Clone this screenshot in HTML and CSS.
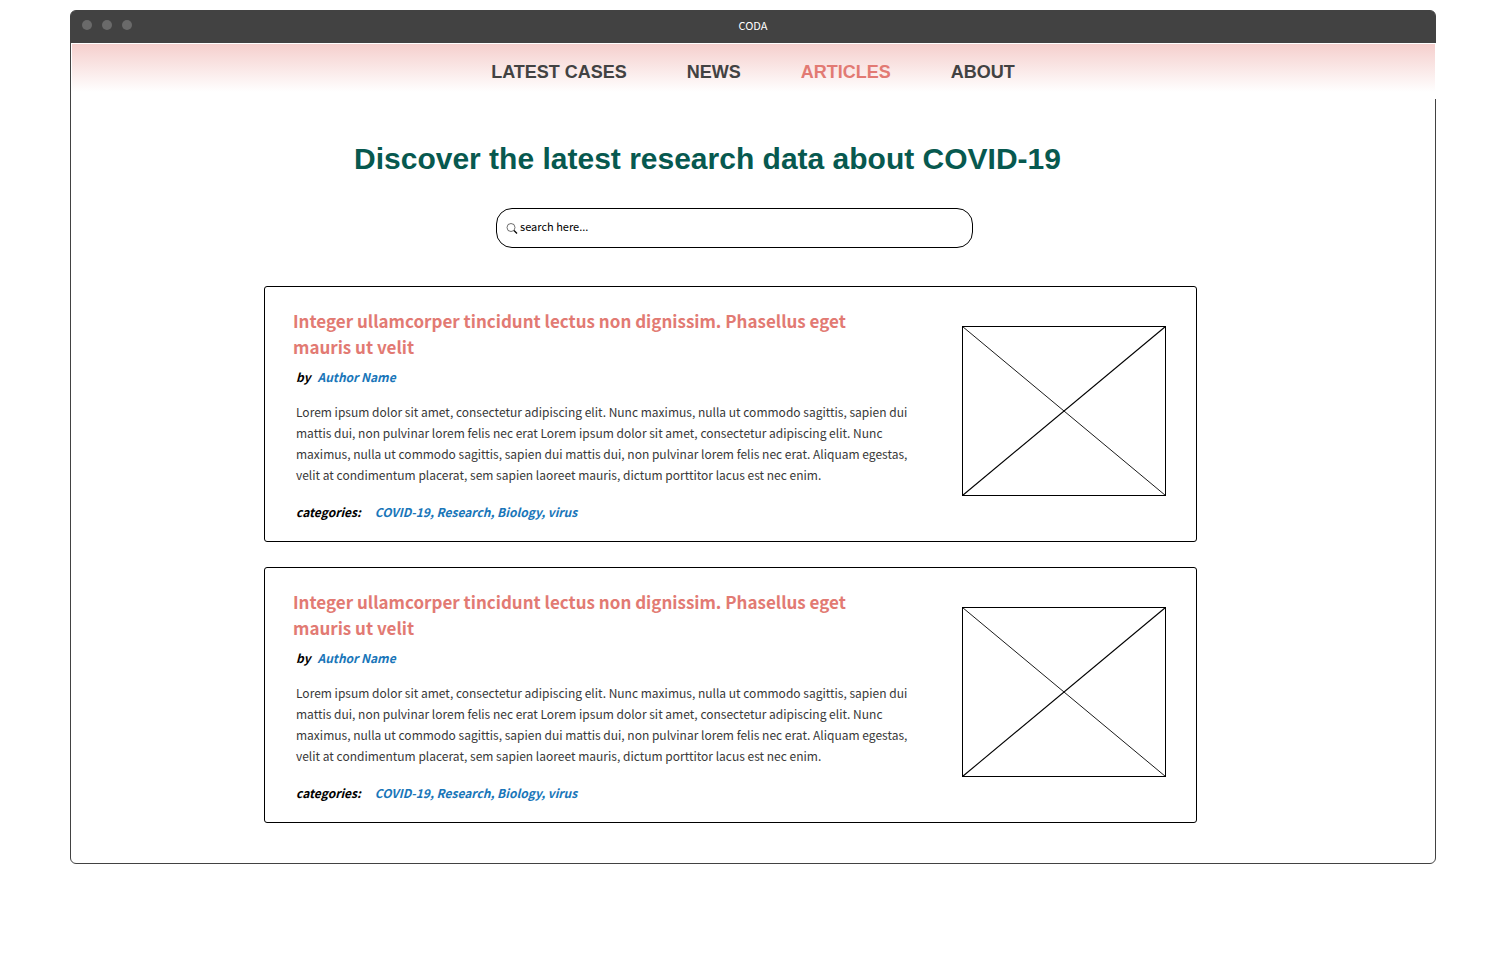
FILE: index.html
```html
<!DOCTYPE html>
<html lang="en">
<head>
<meta charset="utf-8">
<title>CODA</title>
<link rel="stylesheet" href="styles.css">
</head>
<body>
<div class="window">
  <header class="titlebar">
    <span class="dots"><i class="dot"></i><i class="dot"></i><i class="dot"></i></span>
    <span class="window-title">CODA</span>
  </header>
  <nav class="nav">
    <a class="nav-link" href="#">LATEST CASES</a>
    <a class="nav-link" href="#">NEWS</a>
    <a class="nav-link active" href="#" aria-current="page">ARTICLES</a>
    <a class="nav-link" href="#">ABOUT</a>
  </nav>
  <main class="main">
    <h1 class="headline">Discover the latest research data about COVID-19</h1>
    <form class="search" role="search">
      <svg class="search-icon" viewBox="0 0 12 12" aria-hidden="true">
        <circle cx="5" cy="5.5" r="4" fill="none" stroke="#333" stroke-width="0.7"/>
        <path d="M8 8.5L11 11.5" stroke="#000" stroke-width="1.2"/>
      </svg>
      <input class="search-input" type="text" aria-label="Search articles" placeholder="search here...">
    </form>
    <article class="card">
      <div class="card-text">
        <h2 class="card-title">Integer ullamcorper tincidunt lectus non dignissim. Phasellus eget mauris ut velit</h2>
        <p class="byline"><span>by</span><a class="meta-link" href="#">Author Name</a></p>
        <p class="summary">Lorem ipsum dolor sit amet, consectetur adipiscing elit. Nunc maximus, nulla ut commodo sagittis, sapien dui mattis dui, non pulvinar lorem felis nec erat Lorem ipsum dolor sit amet, consectetur adipiscing elit. Nunc maximus, nulla ut commodo sagittis, sapien dui mattis dui, non pulvinar lorem felis nec erat. Aliquam egestas, velit at condimentum placerat, sem sapien laoreet mauris, dictum porttitor lacus est nec enim.</p>
        <p class="categories"><span>categories:</span><a class="meta-link" href="#">COVID-19, Research, Biology, virus</a></p>
      </div>
      <svg class="thumb" viewBox="0 0 204 170" role="img" aria-label="Article image">
        <rect x="0.5" y="0.5" width="203" height="169" fill="none" stroke="#000"/>
        <path d="M0.5 0.5L203.5 169.5" stroke="#000" stroke-width="0.9"/>
        <path d="M203.5 0.5L0.5 169.5" stroke="#000" stroke-width="1.1"/>
      </svg>
    </article>
    <article class="card">
      <div class="card-text">
        <h2 class="card-title">Integer ullamcorper tincidunt lectus non dignissim. Phasellus eget mauris ut velit</h2>
        <p class="byline"><span>by</span><a class="meta-link" href="#">Author Name</a></p>
        <p class="summary">Lorem ipsum dolor sit amet, consectetur adipiscing elit. Nunc maximus, nulla ut commodo sagittis, sapien dui mattis dui, non pulvinar lorem felis nec erat Lorem ipsum dolor sit amet, consectetur adipiscing elit. Nunc maximus, nulla ut commodo sagittis, sapien dui mattis dui, non pulvinar lorem felis nec erat. Aliquam egestas, velit at condimentum placerat, sem sapien laoreet mauris, dictum porttitor lacus est nec enim.</p>
        <p class="categories"><span>categories:</span><a class="meta-link" href="#">COVID-19, Research, Biology, virus</a></p>
      </div>
      <svg class="thumb" viewBox="0 0 204 170" role="img" aria-label="Article image">
        <rect x="0.5" y="0.5" width="203" height="169" fill="none" stroke="#000"/>
        <path d="M0.5 0.5L203.5 169.5" stroke="#000" stroke-width="0.9"/>
        <path d="M203.5 0.5L0.5 169.5" stroke="#000" stroke-width="1.1"/>
      </svg>
    </article>
  </main>
</div>
</body>
</html>
```
FILE: styles.css
```css
* {
  box-sizing: border-box;
}

body {
  margin: 0;
  padding: 10px 50px 10px 70px;
  background: #fff;
  font-family: "Noto Sans CJK SC", "Noto Sans", sans-serif;
  color: #000;
}

a {
  text-decoration: none;
}

.window {
  border: 1px solid #424242;
  border-radius: 6px;
}

.titlebar {
  display: grid;
  grid-template-columns: 1fr auto 1fr;
  align-items: center;
  height: 32px;
  padding: 0 11px 4px;
  border-radius: 4px 4px 0 0;
  background: #424242;
}

.dots {
  display: flex;
  gap: 10px;
}

.dot {
  width: 10px;
  height: 10px;
  border-radius: 50%;
  background: #6a6a6a;
}

.window-title {
  font-size: 11px;
  line-height: 16px;
  color: #fff;
}

.nav {
  display: flex;
  justify-content: center;
  align-items: center;
  gap: 60px;
  height: 56px;
  margin-right: -1px;
  padding-top: 2px;
  padding-right: 1px;
  border: 1px solid #fff;
  background: linear-gradient(#f5cfcd, #fff 48px);
  font-family: "Liberation Sans", Arial, sans-serif;
  font-size: 18px;
  font-weight: 700;
}

.nav-link {
  color: #424242;
}

.nav-link.active {
  color: #e27a73;
}

.main {
  padding: 42px 238px 40px 193px;
}

.headline {
  margin: 0;
  padding-right: 46px;
  font-family: "Liberation Sans", Arial, sans-serif;
  font-size: 30px;
  line-height: 36px;
  text-align: center;
  color: #07594f;
}

.search {
  display: flex;
  align-items: center;
  gap: 2px;
  height: 40px;
  margin: 31px 224px 38px 232px;
  padding: 0 9px;
  border: 1px solid #000;
  border-radius: 16px;
}

.search-icon {
  flex: none;
  width: 12px;
  height: 12px;
}

.search-input {
  flex: 1;
  min-width: 0;
  padding: 0 0 4px;
  border: 0;
  outline: 0;
  background: none;
  font: 11px "Noto Sans CJK SC", "Noto Sans", sans-serif;
  color: #000;
}

.search-input::placeholder {
  color: #000;
  opacity: 1;
}

.card {
  display: flex;
  align-items: flex-start;
  justify-content: space-between;
  gap: 24px;
  padding: 21px 30px 19px 28px;
  border: 1px solid #000;
  border-radius: 3px;
}

.card + .card {
  margin-top: 25px;
}

.card-text {
  flex: 1;
  padding-left: 3px;
}

.card-title {
  max-width: 600px;
  margin: 0 0 0 -3px;
  font-size: 17px;
  line-height: 26px;
  color: #e27a73;
}

.byline,
.categories {
  display: flex;
  gap: 7px;
  margin: 0;
  font-size: 12px;
  font-style: italic;
  font-weight: 700;
  line-height: 20px;
}

.byline {
  margin: 7px 0 14px;
}

.categories {
  gap: 14px;
  margin-top: 17px;
}

.meta-link {
  color: #1976b9;
}

.summary {
  max-width: 620px;
  margin: 0;
  font-size: 12px;
  line-height: 21px;
  color: #383838;
}

.thumb {
  flex: none;
  width: 204px;
  height: 170px;
  margin-top: 18px;
}
```
